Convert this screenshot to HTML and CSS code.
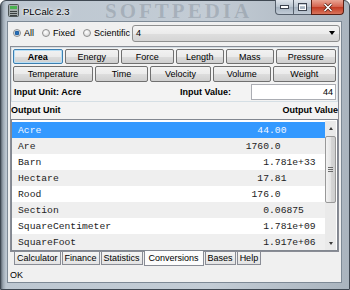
FILE: index.html
```html
<!DOCTYPE html>
<html lang="en">
<head>
    <meta charset="UTF-8">
    <title>PLCalc 2.3</title>
    <link rel="stylesheet" href="styles.css">
</head>
<body>
    <div class="window">
        <!-- title bar -->
        <div class="titlebar">
            <svg class="app-icon" width="11" height="13" viewBox="0 0 11 13">
                <rect x="0.5" y="0.5" width="10" height="12" rx="1" fill="#a3aaaa" stroke="#4f5656"/>
                <rect x="2" y="2" width="7" height="3" fill="#49b350"/>
                <path d="M2 7.5h7M2 9.5h7M2 11.5h7" stroke="#3b4040" stroke-width="1"/>
            </svg>
            <span class="title">PLCalc 2.3</span>
            <span class="watermark">SOFTPEDIA</span>
            <div class="caption-buttons">
                <div class="cap">
                    <svg width="9" height="4" viewBox="0 0 9 4"><rect x="0.5" y="0.5" width="8" height="3" fill="#fff" stroke="#3d4450"/></svg>
                </div>
                <div class="cap">
                    <svg width="9" height="8" viewBox="0 0 9 8"><rect x="0.5" y="0.5" width="8" height="7" fill="none" stroke="#3d4450"/><rect x="1.5" y="2.5" width="6" height="4" fill="none" stroke="#fff"/></svg>
                </div>
                <div class="cap close">
                    <svg width="10" height="9" viewBox="0 0 10 9"><path d="M1.5 1l7 7M8.5 1l-7 7" stroke="#4a1a10" stroke-width="3"/><path d="M1.5 1l7 7M8.5 1l-7 7" stroke="#fff" stroke-width="1.6"/></svg>
                </div>
            </div>
        </div>

        <div class="client">
            <!-- display mode -->
            <div class="mode-row">
                <label class="radio checked"><span class="dot"></span>All</label>
                <label class="radio"><span class="dot"></span>Fixed</label>
                <label class="radio"><span class="dot"></span>Scientific</label>
                <div class="combo"><span>4</span><span class="arrow"></span></div>
            </div>

            <div class="pane">
                <div class="units">
                    <div class="btn-row six">
                        <button class="unit-btn active">Area</button>
                        <button class="unit-btn">Energy</button>
                        <button class="unit-btn">Force</button>
                        <button class="unit-btn">Length</button>
                        <button class="unit-btn">Mass</button>
                        <button class="unit-btn">Pressure</button>
                    </div>
                    <div class="btn-row five">
                        <button class="unit-btn">Temperature</button>
                        <button class="unit-btn">Time</button>
                        <button class="unit-btn">Velocity</button>
                        <button class="unit-btn">Volume</button>
                        <button class="unit-btn">Weight</button>
                    </div>
                    <div class="input-row">
                        <span class="lbl">Input Unit: Acre</span>
                        <span class="lbl">Input Value:</span>
                        <div class="input">44</div>
                    </div>
                </div>

                <div class="out-head">
                    <span>Output Unit</span>
                    <span>Output Value</span>
                </div>

                <div class="list">
                    <div class="rows">
                        <div class="row selected"><span class="name">Acre</span><span class="int">44</span><span>.00</span></div>
                        <div class="row"><span class="name">Are</span><span class="int">1760</span><span>.0</span></div>
                        <div class="row"><span class="name">Barn</span><span class="int">1</span><span>.781e+33</span></div>
                        <div class="row"><span class="name">Hectare</span><span class="int">17</span><span>.81</span></div>
                        <div class="row"><span class="name">Rood</span><span class="int">176</span><span>.0</span></div>
                        <div class="row"><span class="name">Section</span><span class="int">0</span><span>.06875</span></div>
                        <div class="row"><span class="name">SquareCentimeter</span><span class="int">1</span><span>.781e+09</span></div>
                        <div class="row"><span class="name">SquareFoot</span><span class="int">1</span><span>.917e+06</span></div>
                    </div>
                    <div class="scrollbar">
                        <div class="sb-arrow up"></div>
                        <div class="sb-thumb"><span></span><span></span><span></span></div>
                        <div class="sb-track"></div>
                        <div class="sb-arrow down"></div>
                    </div>
                </div>
            </div>

            <!-- bottom tabs -->
            <div class="tabs">
                <div class="tab">Calculator</div>
                <div class="tab">Finance</div>
                <div class="tab">Statistics</div>
                <div class="tab current">Conversions</div>
                <div class="tab">Bases</div>
                <div class="tab">Help</div>
            </div>

            <div class="status">OK</div>
        </div>
    </div>
</body>
</html>
```

FILE: styles.css
```css
/* base */
* {
    box-sizing: border-box;
}

body {
    margin: 0;
    font-family: "Liberation Sans", Arial, sans-serif;
    font-size: 9px;
    color: #000;
}

/* window frame */
.window {
    width: 350px;
    height: 290px;
    display: flex;
    flex-direction: column;
    padding: 0 7px 6px 6px;
    background: linear-gradient(90deg, #5f6973 0, #9aa5b0 2px, #bdc7d1 5px, #c3ccd5 60%, #aab4be 100%);
    border: 1px solid #3f4852;
    border-radius: 6px 6px 0 0;
}

.titlebar {
    position: relative;
    height: 20px;
    display: flex;
    align-items: center;
}

.app-icon {
    margin-left: 1px;
    margin-top: -1px;
}

.title {
    position: relative;
    z-index: 1;
    margin-left: 4px;
    font-size: 9.5px;
    text-shadow: 0 0 5px #fff, 0 0 3px #fff;
}

.watermark {
    position: absolute;
    left: 98px;
    top: 0;
    line-height: 20px;
    font-family: "Liberation Serif", serif;
    font-size: 21px;
    font-weight: bold;
    letter-spacing: 3px;
    color: rgba(70, 82, 95, 0.22);
}

.caption-buttons {
    position: absolute;
    right: -2px;
    top: -1px;
    display: flex;
}

.cap {
    width: 19px;
    height: 15px;
    display: flex;
    align-items: center;
    justify-content: center;
    border: 1px solid #56606c;
    border-top: none;
    margin-left: -1px;
    background: linear-gradient(#dfe5ec, #b9c4cf 50%, #a4b1bf 51%, #c2ccd7);
}

.cap:first-child {
    border-radius: 0 0 0 4px;
}

.cap.close {
    width: 33px;
    border-color: #5a2015;
    border-radius: 0 0 4px 0;
    background: linear-gradient(#e9a594, #d4624d 50%, #c23a22 51%, #d9745c);
}

/* client area */
.client {
    flex: 1;
    display: flex;
    flex-direction: column;
    background: #f0f0f0;
    border: 1px solid #7d8995;
}

.mode-row {
    display: flex;
    align-items: center;
    height: 18px;
    margin-top: 2px;
    padding-left: 5px;
}

.radio {
    display: flex;
    align-items: center;
    margin-right: 8px;
}

.radio:nth-child(3) {
    margin-right: 2px;
}

.dot {
    width: 8px;
    height: 8px;
    margin-right: 3px;
    border: 1px solid #8e8f8f;
    border-radius: 50%;
    background: radial-gradient(circle at 40% 35%, #fff, #e2e2e2 60%, #cfcfcf);
}

.radio.checked .dot {
    background: radial-gradient(circle, #2b7ac6 0, #1f5c9e 2px, #dfe8ef 2.6px, #cfcfcf);
}

.combo {
    flex: 1;
    height: 17px;
    margin-right: 1px;
    display: flex;
    align-items: center;
    justify-content: space-between;
    padding: 0 4px 0 3px;
    border: 1px solid #8e8f8f;
    border-radius: 3px;
    background: linear-gradient(#f4f4f4, #ebebeb 50%, #dedede 51%, #d5d5d5);
}

.arrow {
    border-left: 3px solid transparent;
    border-right: 3px solid transparent;
    border-top: 4px solid #000;
}

/* tab pane */
.pane {
    flex: 1;
    display: flex;
    flex-direction: column;
    margin: 4px 2px 0 2px;
    border: 1px solid #898c95;
    background: #f3f3f3;
}

.units {
    border: 1px solid #d5dfe5;
    padding: 1px;
}

.btn-row {
    display: grid;
    gap: 2px;
}

.btn-row.six {
    grid-template-columns: 50fr 55fr 53fr 49fr 48fr 61fr;
    height: 15px;
}

.btn-row.five {
    grid-template-columns: 81fr 53fr 62fr 58fr 64fr;
    height: 16px;
    margin-top: 2px;
}

.unit-btn {
    padding: 0;
    font-family: inherit;
    font-size: 9px;
    color: #000;
    border: 1px solid #707070;
    border-radius: 2px;
    background: linear-gradient(#f2f2f2, #ebebeb 50%, #dddddd 51%, #cfcfcf);
}

.unit-btn.active {
    font-weight: bold;
    border-color: #3c7fb1;
    box-shadow: inset 0 0 0 1px #b9dff5;
}

.input-row {
    display: grid;
    grid-template-columns: 166px 72px 1fr;
    align-items: center;
    height: 16px;
    margin-top: 2px;
}

.lbl {
    font-weight: bold;
    padding-left: 1px;
}

.input {
    height: 16px;
    line-height: 14px;
    text-align: right;
    padding-right: 2px;
    border: 1px solid #abadb3;
    background: #fff;
}

.out-head {
    display: flex;
    justify-content: space-between;
    height: 12px;
    margin-top: 3px;
    font-weight: bold;
    overflow: hidden;
    white-space: nowrap;
}

/* output list */
.list {
    flex: 1;
    display: flex;
    margin-top: 2px;
    border: 1px solid #828790;
    background: #fff;
    padding: 2px 1px 0 0;
    overflow: hidden;
}

.rows {
    flex: 1;
}

.row {
    display: grid;
    grid-template-columns: 200px 57px 1fr;
    height: 16px;
    align-items: center;
    font-family: "Liberation Mono", "Courier New", monospace;
    font-size: 9.7px;
    color: #222;
}

.row:nth-child(even) {
    background: #efefef;
}

.row.selected {
    background: #3399ff;
    color: #f2f7ff;
}

.name {
    padding-left: 6px;
}

.int {
    text-align: right;
}

.scrollbar {
    width: 11px;
    margin-top: -1px;
    display: flex;
    flex-direction: column;
    background: #eaeaea;
}

.sb-arrow {
    height: 14px;
    display: flex;
    justify-content: center;
    align-items: center;
}

.sb-arrow.up::after {
    content: "";
    border-left: 2.5px solid transparent;
    border-right: 2.5px solid transparent;
    border-bottom: 3px solid #3a3a3a;
}

.sb-arrow.down::after {
    content: "";
    border-left: 2.5px solid transparent;
    border-right: 2.5px solid transparent;
    border-top: 3px solid #3a3a3a;
}

.sb-thumb {
    height: 67px;
    margin-top: 1px;
    display: flex;
    flex-direction: column;
    justify-content: center;
    align-items: center;
    gap: 1px;
    border: 1px solid #989898;
    border-radius: 2px;
    background: linear-gradient(90deg, #f3f3f3, #e4e4e4 50%, #d6d6d6 51%, #cfcfcf);
}

.sb-thumb span {
    width: 5px;
    height: 1px;
    background: #6a6a6a;
}

.sb-track {
    flex: 1;
}

/* tabs */
.tabs {
    display: flex;
    height: 16px;
    padding-left: 6px;
}

.tab {
    height: 13px;
    line-height: 12px;
    padding: 0 2px;
    margin-right: 1px;
    border: 1px solid #898c95;
    border-top: none;
    background: linear-gradient(#f4f4f4, #e3e3e3);
}

.tab.current {
    height: 15px;
    margin-top: -1px;
    padding: 1px 4px 0 4px;
    background: #fcfcfc;
}

.status {
    flex: 1;
    display: flex;
    align-items: center;
    padding-left: 2px;
}
```
